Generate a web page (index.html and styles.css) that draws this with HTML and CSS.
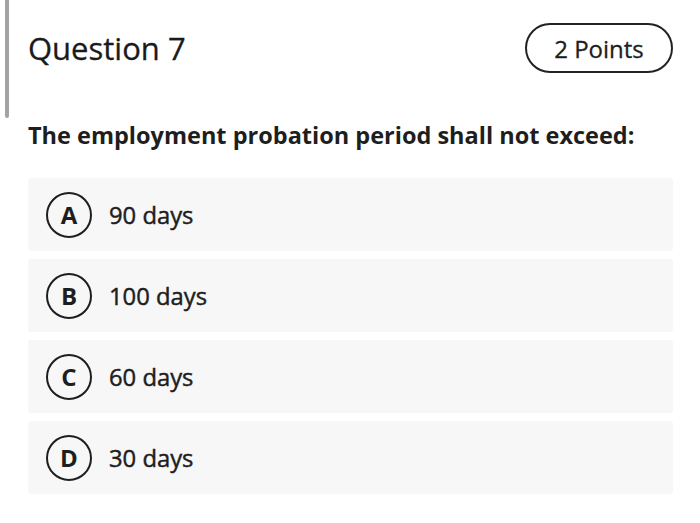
FILE: index.html
```html
<!DOCTYPE html>
<html>
<head>
<meta charset="utf-8">
<link rel="stylesheet" href="styles.css">
</head>
<body>
<div class="page">
  <div class="sidebar-bar"></div>
  <main class="question">
    <header class="q-header">
      <h1 class="q-title">Question 7</h1>
      <span class="q-points">2 Points</span>
    </header>
    <p class="q-text">The employment probation period shall not exceed:</p>
    <ul class="options">
      <li class="option"><span class="opt-letter">A</span><span class="opt-text">90 days</span></li>
      <li class="option"><span class="opt-letter">B</span><span class="opt-text">100 days</span></li>
      <li class="option"><span class="opt-letter">C</span><span class="opt-text">60 days</span></li>
      <li class="option"><span class="opt-letter">D</span><span class="opt-text">30 days</span></li>
    </ul>
  </main>
</div>
</body>
</html>
```

FILE: styles.css
```css
html, body {
  margin: 0;
  padding: 0;
  background: #ffffff;
}
body {
  font-family: "Open Sans", "Liberation Sans", sans-serif;
  color: #222222;
  width: 700px;
  height: 523px;
  overflow: hidden;
}
.page {
  display: flex;
  position: relative;
}
.sidebar-bar {
  position: absolute;
  left: 5px;
  top: 0;
  width: 4px;
  height: 118px;
  background: #a3a3a3;
  border-radius: 0 0 2px 2px;
}
.question {
  flex: 1;
  padding: 23px 27px 0 28px;
}
.q-header {
  display: flex;
  justify-content: space-between;
  align-items: center;
  height: 50px;
}
.q-title {
  margin: 0;
  font-size: 31px;
  font-weight: 400;
  color: #1a1a1a;
  -webkit-text-stroke: 0.3px #1a1a1a;
}
.q-points {
  box-sizing: border-box;
  height: 50px;
  width: 148px;
  border: 2px solid #222;
  border-radius: 25px;
  display: flex;
  align-items: center;
  justify-content: center;
  font-size: 24px;
  font-weight: 400;
  color: #1e1e1e;
  -webkit-text-stroke: 0.3px #1e1e1e;
}
.q-text {
  margin: 46px 0 0;
  font-size: 23.5px;
  font-weight: 700;
  color: #1e1e1e;
  line-height: 32px;
}
.options {
  list-style: none;
  margin: 27px 0 0;
  padding: 0;
  display: flex;
  flex-direction: column;
  gap: 8px;
}
.option {
  height: 73px;
  background: #f7f7f7;
  border-radius: 3px;
  display: flex;
  align-items: center;
  padding-left: 18px;
}
.opt-letter {
  box-sizing: border-box;
  width: 46px;
  height: 46px;
  border: 2.5px solid #1e1e1e;
  border-radius: 50%;
  display: flex;
  align-items: center;
  justify-content: center;
  font-size: 24px;
  font-weight: 700;
  color: #1e1e1e;
}
.opt-text {
  margin-left: 17px;
  font-size: 23.8px;
  font-weight: 400;
  color: #1e1e1e;
  -webkit-text-stroke: 0.45px #1e1e1e;
}
```
